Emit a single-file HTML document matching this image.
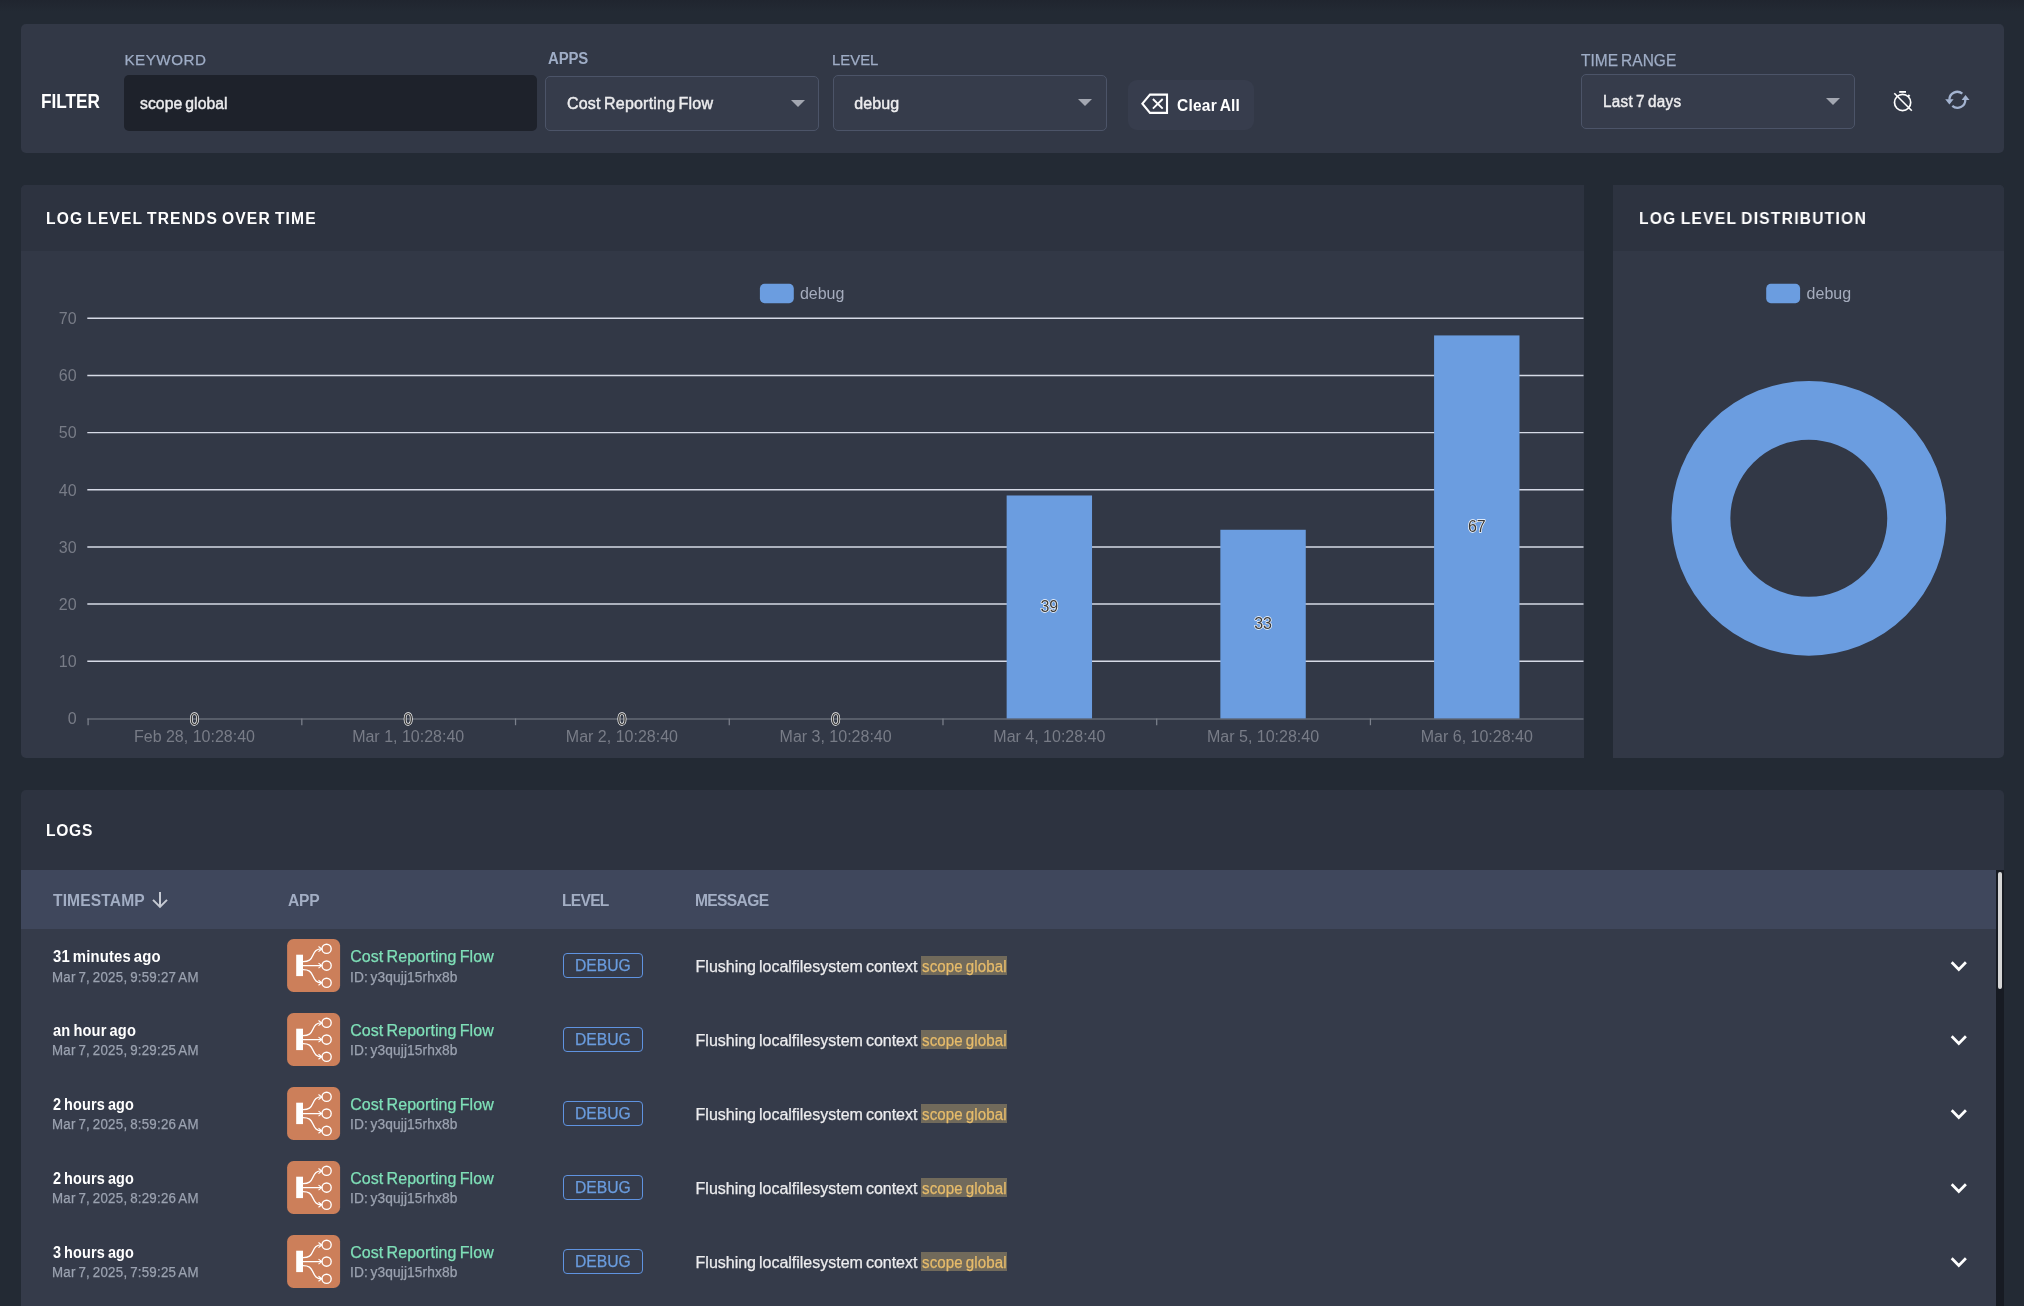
<!DOCTYPE html>
<html lang="en"><head><meta charset="utf-8"><title>Logs</title>
<style>
html,body{margin:0;padding:0}
body{width:2024px;height:1306px;overflow:hidden;position:relative;background:#232a34;font-family:"Liberation Sans",sans-serif}
.shade{position:absolute;left:0;top:0;width:2024px;height:12px;background:linear-gradient(#20252f,#232a34)}
.b{position:absolute;box-sizing:border-box}
.t{position:absolute;white-space:pre;line-height:24px;height:24px;transform-origin:0 50%}
.panel{background:#323846;border-radius:5px}
.head{background:#2d3340}
.sel{background:#363c4b;border:1.3px solid #4c5468;border-radius:5px}
.caret{position:absolute;width:0;height:0;border-left:7px solid transparent;border-right:7px solid transparent;border-top:7.3px solid #a3a7b1}
svg{position:absolute;overflow:visible}
svg text{font-family:"Liberation Sans",sans-serif}
</style></head><body>
<div class="shade"></div>
<div id="app" style="position:absolute;left:0;top:0;width:2024px;height:1306px;will-change:transform">

<div class="b panel" style="left:21px;top:24px;width:1983px;height:129px"></div>
<div class="t" style="left:40.60px;top:89.44px;font-size:19.8px;font-weight:700;letter-spacing:0.006px;color:#fff;transform:scaleX(0.8700);">FILTER</div>
<div class="t" style="left:124.40px;top:47.83px;font-size:15.2px;font-weight:400;letter-spacing:0.531px;color:#9fadc6;-webkit-text-stroke:0.25px;">KEYWORD</div>
<div class="b" style="left:124px;top:75px;width:413px;height:55.7px;background:#1e222b;border-radius:5px"></div>
<div class="t" style="left:140.20px;top:92.06px;font-size:16px;font-weight:400;letter-spacing:0.055px;word-spacing:-1.36px;color:#ececee;transform:scaleX(0.9828);-webkit-text-stroke:0.25px;-webkit-text-stroke:0.45px;">scope global</div>
<div class="t" style="left:548.40px;top:46.53px;font-size:15.8px;font-weight:700;letter-spacing:-0.125px;color:#9fadc6;transform:scaleX(0.9458);">APPS</div>
<div class="b sel" style="left:545px;top:75.7px;width:274px;height:55px"></div>
<div class="t" style="left:567.00px;top:92.16px;font-size:16px;font-weight:400;letter-spacing:0.209px;word-spacing:-1.36px;color:#ececee;-webkit-text-stroke:0.25px;-webkit-text-stroke:0.45px;">Cost Reporting Flow</div>
<div class="caret" style="left:790.7px;top:100px"></div>
<div class="t" style="left:832.20px;top:47.83px;font-size:15.2px;font-weight:400;letter-spacing:-0.020px;color:#9fadc6;transform:scaleX(0.9832);-webkit-text-stroke:0.25px;">LEVEL</div>
<div class="b sel" style="left:833px;top:75.2px;width:274px;height:55.5px"></div>
<div class="t" style="left:854.20px;top:92.16px;font-size:16px;font-weight:400;letter-spacing:0.140px;color:#ececee;-webkit-text-stroke:0.25px;-webkit-text-stroke:0.45px;">debug</div>
<div class="caret" style="left:1077.8px;top:99px"></div>
<div class="b" style="left:1128px;top:80px;width:126px;height:50px;background:#373d4d;border-radius:9px"></div>
<svg style="left:1138px;top:90px" width="34" height="28" viewBox="1138 90 34 28"><path d="M1142.4 103.7 L1150 94.6 H1167 V112.9 H1150 Z" fill="none" stroke="#fff" stroke-width="2.1" stroke-linejoin="miter"/><path d="M1152.9 99 L1162.7 108.6 M1162.7 99 L1152.9 108.6" stroke="#fff" stroke-width="1.9" fill="none"/></svg>
<div class="t" style="left:1177.40px;top:93.66px;font-size:16px;font-weight:700;letter-spacing:0.262px;word-spacing:-1.36px;color:#fff;transform:scaleX(0.9669);">Clear All</div>
<div class="t" style="left:1581.40px;top:47.69px;font-size:16.2px;font-weight:400;letter-spacing:0.038px;word-spacing:-1.38px;color:#9fadc6;transform:scaleX(0.9550);-webkit-text-stroke:0.25px;">TIME RANGE</div>
<div class="b sel" style="left:1581px;top:74px;width:274px;height:54.7px"></div>
<div class="t" style="left:1603.00px;top:89.76px;font-size:16px;font-weight:400;letter-spacing:0.284px;word-spacing:-1.36px;color:#ececee;transform:scaleX(0.9532);-webkit-text-stroke:0.25px;-webkit-text-stroke:0.45px;">Last 7 days</div>
<div class="caret" style="left:1826px;top:97.8px"></div>
<svg style="left:1888px;top:86px" width="30" height="30" viewBox="1888 86 30 30"><g fill="none" stroke="#fff" stroke-width="1.7"><circle cx="1902.6" cy="102.5" r="8.1"/><path d="M1899.2 91.9 H1906" stroke-width="1.8"/><path d="M1908 96.6 L1909.6 95" stroke-width="2"/><path d="M1894.3 93.2 L1911.8 110.8" stroke-width="1.6"/></g></svg>
<svg style="left:1942px;top:86px" width="30" height="30" viewBox="1942 86 30 30"><g fill="none" stroke="#a3b3d0" stroke-width="2.3"><path d="M1949.4 99.8 A7.9 7.9 0 0 1 1962.3 93.6"/><path d="M1965.3 99.6 A7.9 7.9 0 0 1 1952.3 105.9"/></g><path d="M1945.2 99.3 H1953.6 L1949.4 104.4 Z" fill="#a3b3d0"/><path d="M1961.6 100.1 H1969.5 L1965.5 95 Z" fill="#a3b3d0"/></svg>
<div class="b panel" style="left:21px;top:185px;width:1563px;height:573px;border-radius:5px 0 0 5px"></div>
<div class="b head" style="left:21px;top:185px;width:1563px;height:66px;border-radius:5px 0 0 0"></div>
<div class="t" style="left:46.20px;top:206.20px;font-size:17.33px;font-weight:700;letter-spacing:1.253px;word-spacing:-1.47px;color:#fff;transform:scaleX(0.9000);">LOG LEVEL TRENDS OVER TIME</div>
<svg style="left:0;top:251px" width="1584" height="507" viewBox="0 251 1584 507">
<rect x="759.9" y="283.8" width="33.9" height="19.4" rx="4.6" fill="#6b9de0"/>
<text x="799.9" y="298.9" font-size="16" fill="#a5acbd">debug</text>
<line x1="87.3" x2="1583.5" y1="661.24" y2="661.24" stroke="#d6dae6" stroke-width="1.45"/>
<line x1="87.3" x2="1583.5" y1="604.08" y2="604.08" stroke="#d6dae6" stroke-width="1.45"/>
<line x1="87.3" x2="1583.5" y1="546.92" y2="546.92" stroke="#d6dae6" stroke-width="1.45"/>
<line x1="87.3" x2="1583.5" y1="489.76" y2="489.76" stroke="#d6dae6" stroke-width="1.45"/>
<line x1="87.3" x2="1583.5" y1="432.60" y2="432.60" stroke="#d6dae6" stroke-width="1.45"/>
<line x1="87.3" x2="1583.5" y1="375.44" y2="375.44" stroke="#d6dae6" stroke-width="1.45"/>
<line x1="87.3" x2="1583.5" y1="318.28" y2="318.28" stroke="#d6dae6" stroke-width="1.45"/>
<line x1="87.3" x2="1583.5" y1="719.00" y2="719.00" stroke="#7c818c" stroke-width="1.2"/>
<line x1="88.10" x2="88.10" y1="718.40" y2="725.2" stroke="#7c818c" stroke-width="1.25"/>
<line x1="301.82" x2="301.82" y1="718.40" y2="725.2" stroke="#7c818c" stroke-width="1.25"/>
<line x1="515.54" x2="515.54" y1="718.40" y2="725.2" stroke="#7c818c" stroke-width="1.25"/>
<line x1="729.26" x2="729.26" y1="718.40" y2="725.2" stroke="#7c818c" stroke-width="1.25"/>
<line x1="942.98" x2="942.98" y1="718.40" y2="725.2" stroke="#7c818c" stroke-width="1.25"/>
<line x1="1156.70" x2="1156.70" y1="718.40" y2="725.2" stroke="#7c818c" stroke-width="1.25"/>
<line x1="1370.42" x2="1370.42" y1="718.40" y2="725.2" stroke="#7c818c" stroke-width="1.25"/>
<text x="76.6" y="724.25" font-size="16" text-anchor="end" fill="#787c87">0</text>
<text x="76.6" y="667.09" font-size="16" text-anchor="end" fill="#787c87">10</text>
<text x="76.6" y="609.93" font-size="16" text-anchor="end" fill="#787c87">20</text>
<text x="76.6" y="552.77" font-size="16" text-anchor="end" fill="#787c87">30</text>
<text x="76.6" y="495.61" font-size="16" text-anchor="end" fill="#787c87">40</text>
<text x="76.6" y="438.45" font-size="16" text-anchor="end" fill="#787c87">50</text>
<text x="76.6" y="381.29" font-size="16" text-anchor="end" fill="#787c87">60</text>
<text x="76.6" y="324.13" font-size="16" text-anchor="end" fill="#787c87">70</text>
<text x="194.46" y="724.50" font-size="16" text-anchor="middle" fill="#3a3a3a" stroke="#fff" stroke-width="1.3" paint-order="stroke" stroke-linejoin="round">0</text>
<text x="194.46" y="742.3" font-size="16" text-anchor="middle" fill="#787c87">Feb 28, 10:28:40</text>
<text x="408.18" y="724.50" font-size="16" text-anchor="middle" fill="#3a3a3a" stroke="#fff" stroke-width="1.3" paint-order="stroke" stroke-linejoin="round">0</text>
<text x="408.18" y="742.3" font-size="16" text-anchor="middle" fill="#787c87">Mar 1, 10:28:40</text>
<text x="621.90" y="724.50" font-size="16" text-anchor="middle" fill="#3a3a3a" stroke="#fff" stroke-width="1.3" paint-order="stroke" stroke-linejoin="round">0</text>
<text x="621.90" y="742.3" font-size="16" text-anchor="middle" fill="#787c87">Mar 2, 10:28:40</text>
<text x="835.62" y="724.50" font-size="16" text-anchor="middle" fill="#3a3a3a" stroke="#fff" stroke-width="1.3" paint-order="stroke" stroke-linejoin="round">0</text>
<text x="835.62" y="742.3" font-size="16" text-anchor="middle" fill="#787c87">Mar 3, 10:28:40</text>
<rect x="1006.64" y="495.48" width="85.4" height="222.92" fill="#6b9de0"/>
<text x="1049.34" y="612.04" font-size="16" text-anchor="middle" fill="#3a3a3a" stroke="#fff" stroke-width="1.3" paint-order="stroke" stroke-linejoin="round">39</text>
<text x="1049.34" y="742.3" font-size="16" text-anchor="middle" fill="#787c87">Mar 4, 10:28:40</text>
<rect x="1220.36" y="529.77" width="85.4" height="188.63" fill="#6b9de0"/>
<text x="1263.06" y="629.19" font-size="16" text-anchor="middle" fill="#3a3a3a" stroke="#fff" stroke-width="1.3" paint-order="stroke" stroke-linejoin="round">33</text>
<text x="1263.06" y="742.3" font-size="16" text-anchor="middle" fill="#787c87">Mar 5, 10:28:40</text>
<rect x="1434.08" y="335.43" width="85.4" height="382.97" fill="#6b9de0"/>
<text x="1476.78" y="532.01" font-size="16" text-anchor="middle" fill="#3a3a3a" stroke="#fff" stroke-width="1.3" paint-order="stroke" stroke-linejoin="round">67</text>
<text x="1476.78" y="742.3" font-size="16" text-anchor="middle" fill="#787c87">Mar 6, 10:28:40</text>
</svg>
<div class="b panel" style="left:1613px;top:185px;width:391px;height:573px;border-radius:0 5px 5px 0"></div>
<div class="b head" style="left:1613px;top:185px;width:391px;height:66px;border-radius:0 5px 0 0"></div>
<div class="t" style="left:1639.20px;top:206.20px;font-size:17.33px;font-weight:700;letter-spacing:1.377px;word-spacing:-1.47px;color:#fff;transform:scaleX(0.9000);">LOG LEVEL DISTRIBUTION</div>
<svg style="left:1613px;top:251px" width="391" height="507" viewBox="1613 251 391 507"><rect x="1766.2" y="283.8" width="33.9" height="19.4" rx="4.6" fill="#6b9de0"/><text x="1806.6" y="298.9" font-size="16" fill="#a5acbd">debug</text><circle cx="1808.8" cy="518.3" r="107.9" fill="none" stroke="#6b9de0" stroke-width="58.9"/></svg>
<div class="b head" style="left:21px;top:790px;width:1983px;height:520px;border-radius:5px 5px 0 0"></div>
<div class="t" style="left:46.20px;top:818.00px;font-size:17.33px;font-weight:700;letter-spacing:0.806px;color:#fff;transform:scaleX(0.9000);">LOGS</div>
<div class="b" style="left:21px;top:870px;width:1975.3px;height:59px;background:#3f475c"></div>
<div class="b" style="left:21px;top:929px;width:1975.3px;height:380px;background:#353b4a"></div>
<div class="b" style="left:1996.3px;top:870px;width:7.7px;height:440px;background:#171b23"></div>
<div class="b" style="left:1997.8px;top:871.8px;width:4.5px;height:117.5px;background:#d6d6d6;border-radius:2.3px"></div>
<div class="t" style="left:52.60px;top:888.00px;font-size:17.33px;font-weight:700;letter-spacing:0.141px;color:#a3aec4;transform:scaleX(0.9000);">TIMESTAMP</div>
<div class="t" style="left:287.80px;top:888.00px;font-size:17.33px;font-weight:700;letter-spacing:-0.228px;color:#a3aec4;transform:scaleX(0.9000);">APP</div>
<div class="t" style="left:561.60px;top:888.00px;font-size:17.33px;font-weight:700;letter-spacing:-0.798px;color:#a3aec4;transform:scaleX(0.9000);">LEVEL</div>
<div class="t" style="left:695.00px;top:888.00px;font-size:17.33px;font-weight:700;letter-spacing:-0.721px;color:#a3aec4;transform:scaleX(0.9000);">MESSAGE</div>
<svg style="left:150px;top:888px" width="20" height="24" viewBox="150 888 20 24"><path d="M160 892 V906.6 M153 899.9 L160 906.9 L167 899.9" fill="none" stroke="#c6cad3" stroke-width="2"/></svg>
<div class="t" style="left:53.40px;top:945.06px;font-size:16px;font-weight:700;letter-spacing:0.144px;word-spacing:-1.36px;color:#fff;transform:scaleX(0.9297);">31 minutes ago</div>
<div class="t" style="left:52.40px;top:965.25px;font-size:14px;font-weight:400;letter-spacing:0.259px;word-spacing:-1.19px;color:#9ba2b0;transform:scaleX(0.9496);-webkit-text-stroke:0.25px;">Mar 7, 2025, 9:59:27 AM</div>
<svg style="left:287px;top:939px" width="53" height="53" viewBox="0 0 53 53"><rect x="0.1" y="0" width="53" height="53" rx="6.5" fill="#cc7f5a"/><rect x="9.2" y="15.7" width="6.8" height="21.4" fill="#fff"/><g fill="none" stroke="#fff" stroke-width="1.35"><circle cx="39.6" cy="9.8" r="4.6"/><circle cx="39.6" cy="26.6" r="4.6"/><circle cx="39.6" cy="43.8" r="4.6"/><path d="M16 22.6 C22 22.6 24 20.6 25.8 16.5 C27.8 12 29.5 9.9 34.5 9.9 M16 26.6 H34.5 M16 30.6 C22 30.6 24 32.6 25.8 36.8 C27.8 41.3 29.5 43.7 34.5 43.7"/><path d="M31.5 7.5 L34.8 10 L31.5 12.6 M31.5 24.1 L34.8 26.6 L31.5 29.1 M31.5 41.3 L34.8 43.8 L31.5 46.3" stroke-width="1.1"/></g></svg>
<div class="t" style="left:350.20px;top:944.66px;font-size:16px;font-weight:400;letter-spacing:0.072px;word-spacing:-1.36px;color:#7fe0b8;-webkit-text-stroke:0.25px;">Cost Reporting Flow</div>
<div class="t" style="left:350.20px;top:965.35px;font-size:14px;font-weight:400;letter-spacing:0.094px;word-spacing:-1.19px;color:#9ba2b0;transform:scaleX(0.9821);-webkit-text-stroke:0.25px;">ID: y3qujj15rhx8b</div>
<div class="b" style="left:563px;top:953px;width:80px;height:24.8px;border:1.3px solid #5f93e0;border-radius:4px"></div>
<div class="t" style="left:575.00px;top:954.26px;font-size:16px;font-weight:400;letter-spacing:0.000px;color:#6a9cde;transform:scaleX(0.9806);-webkit-text-stroke:0.25px;">DEBUG</div>
<div class="t" style="left:695.60px;top:955.46px;font-size:16px;font-weight:400;letter-spacing:-0.015px;word-spacing:-1.36px;color:#ececee;-webkit-text-stroke:0.25px;">Flushing localfilesystem context</div>
<div class="b" style="left:921.2px;top:956px;width:85.7px;height:19.3px;background:#716a5b"></div>
<div class="t" style="left:921.50px;top:955.46px;font-size:16px;font-weight:400;letter-spacing:0.113px;word-spacing:-1.36px;color:#e6bb6a;transform:scaleX(0.9427);-webkit-text-stroke:0.25px;">scope global</div>
<svg style="left:1948px;top:958px" width="22" height="16" viewBox="1948 958 22 16"><path d="M1951.7 962.2 L1958.8 969.5 L1965.9 962.2" fill="none" stroke="#fff" stroke-width="2.7"/></svg>
<div class="t" style="left:53.40px;top:1019.06px;font-size:16px;font-weight:700;letter-spacing:0.165px;word-spacing:-1.36px;color:#fff;transform:scaleX(0.9163);">an hour ago</div>
<div class="t" style="left:52.40px;top:1038.25px;font-size:14px;font-weight:400;letter-spacing:0.259px;word-spacing:-1.19px;color:#9ba2b0;transform:scaleX(0.9496);-webkit-text-stroke:0.25px;">Mar 7, 2025, 9:29:25 AM</div>
<svg style="left:287px;top:1013px" width="53" height="53" viewBox="0 0 53 53"><rect x="0.1" y="0" width="53" height="53" rx="6.5" fill="#cc7f5a"/><rect x="9.2" y="15.7" width="6.8" height="21.4" fill="#fff"/><g fill="none" stroke="#fff" stroke-width="1.35"><circle cx="39.6" cy="9.8" r="4.6"/><circle cx="39.6" cy="26.6" r="4.6"/><circle cx="39.6" cy="43.8" r="4.6"/><path d="M16 22.6 C22 22.6 24 20.6 25.8 16.5 C27.8 12 29.5 9.9 34.5 9.9 M16 26.6 H34.5 M16 30.6 C22 30.6 24 32.6 25.8 36.8 C27.8 41.3 29.5 43.7 34.5 43.7"/><path d="M31.5 7.5 L34.8 10 L31.5 12.6 M31.5 24.1 L34.8 26.6 L31.5 29.1 M31.5 41.3 L34.8 43.8 L31.5 46.3" stroke-width="1.1"/></g></svg>
<div class="t" style="left:350.20px;top:1018.66px;font-size:16px;font-weight:400;letter-spacing:0.072px;word-spacing:-1.36px;color:#7fe0b8;-webkit-text-stroke:0.25px;">Cost Reporting Flow</div>
<div class="t" style="left:350.20px;top:1038.25px;font-size:14px;font-weight:400;letter-spacing:0.094px;word-spacing:-1.19px;color:#9ba2b0;transform:scaleX(0.9821);-webkit-text-stroke:0.25px;">ID: y3qujj15rhx8b</div>
<div class="b" style="left:563px;top:1027px;width:80px;height:24.8px;border:1.3px solid #5f93e0;border-radius:4px"></div>
<div class="t" style="left:575.00px;top:1028.26px;font-size:16px;font-weight:400;letter-spacing:0.000px;color:#6a9cde;transform:scaleX(0.9806);-webkit-text-stroke:0.25px;">DEBUG</div>
<div class="t" style="left:695.60px;top:1029.46px;font-size:16px;font-weight:400;letter-spacing:-0.015px;word-spacing:-1.36px;color:#ececee;-webkit-text-stroke:0.25px;">Flushing localfilesystem context</div>
<div class="b" style="left:921.2px;top:1030px;width:85.7px;height:19.3px;background:#716a5b"></div>
<div class="t" style="left:921.50px;top:1029.46px;font-size:16px;font-weight:400;letter-spacing:0.113px;word-spacing:-1.36px;color:#e6bb6a;transform:scaleX(0.9427);-webkit-text-stroke:0.25px;">scope global</div>
<svg style="left:1948px;top:1032px" width="22" height="16" viewBox="1948 958 22 16"><path d="M1951.7 962.2 L1958.8 969.5 L1965.9 962.2" fill="none" stroke="#fff" stroke-width="2.7"/></svg>
<div class="t" style="left:53.40px;top:1093.06px;font-size:16px;font-weight:700;letter-spacing:0.165px;word-spacing:-1.36px;color:#fff;transform:scaleX(0.9031);">2 hours ago</div>
<div class="t" style="left:52.40px;top:1112.25px;font-size:14px;font-weight:400;letter-spacing:0.259px;word-spacing:-1.19px;color:#9ba2b0;transform:scaleX(0.9496);-webkit-text-stroke:0.25px;">Mar 7, 2025, 8:59:26 AM</div>
<svg style="left:287px;top:1087px" width="53" height="53" viewBox="0 0 53 53"><rect x="0.1" y="0" width="53" height="53" rx="6.5" fill="#cc7f5a"/><rect x="9.2" y="15.7" width="6.8" height="21.4" fill="#fff"/><g fill="none" stroke="#fff" stroke-width="1.35"><circle cx="39.6" cy="9.8" r="4.6"/><circle cx="39.6" cy="26.6" r="4.6"/><circle cx="39.6" cy="43.8" r="4.6"/><path d="M16 22.6 C22 22.6 24 20.6 25.8 16.5 C27.8 12 29.5 9.9 34.5 9.9 M16 26.6 H34.5 M16 30.6 C22 30.6 24 32.6 25.8 36.8 C27.8 41.3 29.5 43.7 34.5 43.7"/><path d="M31.5 7.5 L34.8 10 L31.5 12.6 M31.5 24.1 L34.8 26.6 L31.5 29.1 M31.5 41.3 L34.8 43.8 L31.5 46.3" stroke-width="1.1"/></g></svg>
<div class="t" style="left:350.20px;top:1092.66px;font-size:16px;font-weight:400;letter-spacing:0.072px;word-spacing:-1.36px;color:#7fe0b8;-webkit-text-stroke:0.25px;">Cost Reporting Flow</div>
<div class="t" style="left:350.20px;top:1112.25px;font-size:14px;font-weight:400;letter-spacing:0.094px;word-spacing:-1.19px;color:#9ba2b0;transform:scaleX(0.9821);-webkit-text-stroke:0.25px;">ID: y3qujj15rhx8b</div>
<div class="b" style="left:563px;top:1101px;width:80px;height:24.8px;border:1.3px solid #5f93e0;border-radius:4px"></div>
<div class="t" style="left:575.00px;top:1102.26px;font-size:16px;font-weight:400;letter-spacing:0.000px;color:#6a9cde;transform:scaleX(0.9806);-webkit-text-stroke:0.25px;">DEBUG</div>
<div class="t" style="left:695.60px;top:1103.46px;font-size:16px;font-weight:400;letter-spacing:-0.015px;word-spacing:-1.36px;color:#ececee;-webkit-text-stroke:0.25px;">Flushing localfilesystem context</div>
<div class="b" style="left:921.2px;top:1104px;width:85.7px;height:19.3px;background:#716a5b"></div>
<div class="t" style="left:921.50px;top:1103.46px;font-size:16px;font-weight:400;letter-spacing:0.113px;word-spacing:-1.36px;color:#e6bb6a;transform:scaleX(0.9427);-webkit-text-stroke:0.25px;">scope global</div>
<svg style="left:1948px;top:1106px" width="22" height="16" viewBox="1948 958 22 16"><path d="M1951.7 962.2 L1958.8 969.5 L1965.9 962.2" fill="none" stroke="#fff" stroke-width="2.7"/></svg>
<div class="t" style="left:53.40px;top:1167.06px;font-size:16px;font-weight:700;letter-spacing:0.165px;word-spacing:-1.36px;color:#fff;transform:scaleX(0.9031);">2 hours ago</div>
<div class="t" style="left:52.40px;top:1186.25px;font-size:14px;font-weight:400;letter-spacing:0.259px;word-spacing:-1.19px;color:#9ba2b0;transform:scaleX(0.9496);-webkit-text-stroke:0.25px;">Mar 7, 2025, 8:29:26 AM</div>
<svg style="left:287px;top:1161px" width="53" height="53" viewBox="0 0 53 53"><rect x="0.1" y="0" width="53" height="53" rx="6.5" fill="#cc7f5a"/><rect x="9.2" y="15.7" width="6.8" height="21.4" fill="#fff"/><g fill="none" stroke="#fff" stroke-width="1.35"><circle cx="39.6" cy="9.8" r="4.6"/><circle cx="39.6" cy="26.6" r="4.6"/><circle cx="39.6" cy="43.8" r="4.6"/><path d="M16 22.6 C22 22.6 24 20.6 25.8 16.5 C27.8 12 29.5 9.9 34.5 9.9 M16 26.6 H34.5 M16 30.6 C22 30.6 24 32.6 25.8 36.8 C27.8 41.3 29.5 43.7 34.5 43.7"/><path d="M31.5 7.5 L34.8 10 L31.5 12.6 M31.5 24.1 L34.8 26.6 L31.5 29.1 M31.5 41.3 L34.8 43.8 L31.5 46.3" stroke-width="1.1"/></g></svg>
<div class="t" style="left:350.20px;top:1166.66px;font-size:16px;font-weight:400;letter-spacing:0.072px;word-spacing:-1.36px;color:#7fe0b8;-webkit-text-stroke:0.25px;">Cost Reporting Flow</div>
<div class="t" style="left:350.20px;top:1186.25px;font-size:14px;font-weight:400;letter-spacing:0.094px;word-spacing:-1.19px;color:#9ba2b0;transform:scaleX(0.9821);-webkit-text-stroke:0.25px;">ID: y3qujj15rhx8b</div>
<div class="b" style="left:563px;top:1175px;width:80px;height:24.8px;border:1.3px solid #5f93e0;border-radius:4px"></div>
<div class="t" style="left:575.00px;top:1176.26px;font-size:16px;font-weight:400;letter-spacing:0.000px;color:#6a9cde;transform:scaleX(0.9806);-webkit-text-stroke:0.25px;">DEBUG</div>
<div class="t" style="left:695.60px;top:1177.46px;font-size:16px;font-weight:400;letter-spacing:-0.015px;word-spacing:-1.36px;color:#ececee;-webkit-text-stroke:0.25px;">Flushing localfilesystem context</div>
<div class="b" style="left:921.2px;top:1178px;width:85.7px;height:19.3px;background:#716a5b"></div>
<div class="t" style="left:921.50px;top:1177.46px;font-size:16px;font-weight:400;letter-spacing:0.113px;word-spacing:-1.36px;color:#e6bb6a;transform:scaleX(0.9427);-webkit-text-stroke:0.25px;">scope global</div>
<svg style="left:1948px;top:1180px" width="22" height="16" viewBox="1948 958 22 16"><path d="M1951.7 962.2 L1958.8 969.5 L1965.9 962.2" fill="none" stroke="#fff" stroke-width="2.7"/></svg>
<div class="t" style="left:53.40px;top:1241.06px;font-size:16px;font-weight:700;letter-spacing:0.165px;word-spacing:-1.36px;color:#fff;transform:scaleX(0.9031);">3 hours ago</div>
<div class="t" style="left:52.40px;top:1260.25px;font-size:14px;font-weight:400;letter-spacing:0.259px;word-spacing:-1.19px;color:#9ba2b0;transform:scaleX(0.9496);-webkit-text-stroke:0.25px;">Mar 7, 2025, 7:59:25 AM</div>
<svg style="left:287px;top:1235px" width="53" height="53" viewBox="0 0 53 53"><rect x="0.1" y="0" width="53" height="53" rx="6.5" fill="#cc7f5a"/><rect x="9.2" y="15.7" width="6.8" height="21.4" fill="#fff"/><g fill="none" stroke="#fff" stroke-width="1.35"><circle cx="39.6" cy="9.8" r="4.6"/><circle cx="39.6" cy="26.6" r="4.6"/><circle cx="39.6" cy="43.8" r="4.6"/><path d="M16 22.6 C22 22.6 24 20.6 25.8 16.5 C27.8 12 29.5 9.9 34.5 9.9 M16 26.6 H34.5 M16 30.6 C22 30.6 24 32.6 25.8 36.8 C27.8 41.3 29.5 43.7 34.5 43.7"/><path d="M31.5 7.5 L34.8 10 L31.5 12.6 M31.5 24.1 L34.8 26.6 L31.5 29.1 M31.5 41.3 L34.8 43.8 L31.5 46.3" stroke-width="1.1"/></g></svg>
<div class="t" style="left:350.20px;top:1240.66px;font-size:16px;font-weight:400;letter-spacing:0.072px;word-spacing:-1.36px;color:#7fe0b8;-webkit-text-stroke:0.25px;">Cost Reporting Flow</div>
<div class="t" style="left:350.20px;top:1260.25px;font-size:14px;font-weight:400;letter-spacing:0.094px;word-spacing:-1.19px;color:#9ba2b0;transform:scaleX(0.9821);-webkit-text-stroke:0.25px;">ID: y3qujj15rhx8b</div>
<div class="b" style="left:563px;top:1249px;width:80px;height:24.8px;border:1.3px solid #5f93e0;border-radius:4px"></div>
<div class="t" style="left:575.00px;top:1250.26px;font-size:16px;font-weight:400;letter-spacing:0.000px;color:#6a9cde;transform:scaleX(0.9806);-webkit-text-stroke:0.25px;">DEBUG</div>
<div class="t" style="left:695.60px;top:1251.46px;font-size:16px;font-weight:400;letter-spacing:-0.015px;word-spacing:-1.36px;color:#ececee;-webkit-text-stroke:0.25px;">Flushing localfilesystem context</div>
<div class="b" style="left:921.2px;top:1252px;width:85.7px;height:19.3px;background:#716a5b"></div>
<div class="t" style="left:921.50px;top:1251.46px;font-size:16px;font-weight:400;letter-spacing:0.113px;word-spacing:-1.36px;color:#e6bb6a;transform:scaleX(0.9427);-webkit-text-stroke:0.25px;">scope global</div>
<svg style="left:1948px;top:1254px" width="22" height="16" viewBox="1948 958 22 16"><path d="M1951.7 962.2 L1958.8 969.5 L1965.9 962.2" fill="none" stroke="#fff" stroke-width="2.7"/></svg>
</div>
</body></html>
